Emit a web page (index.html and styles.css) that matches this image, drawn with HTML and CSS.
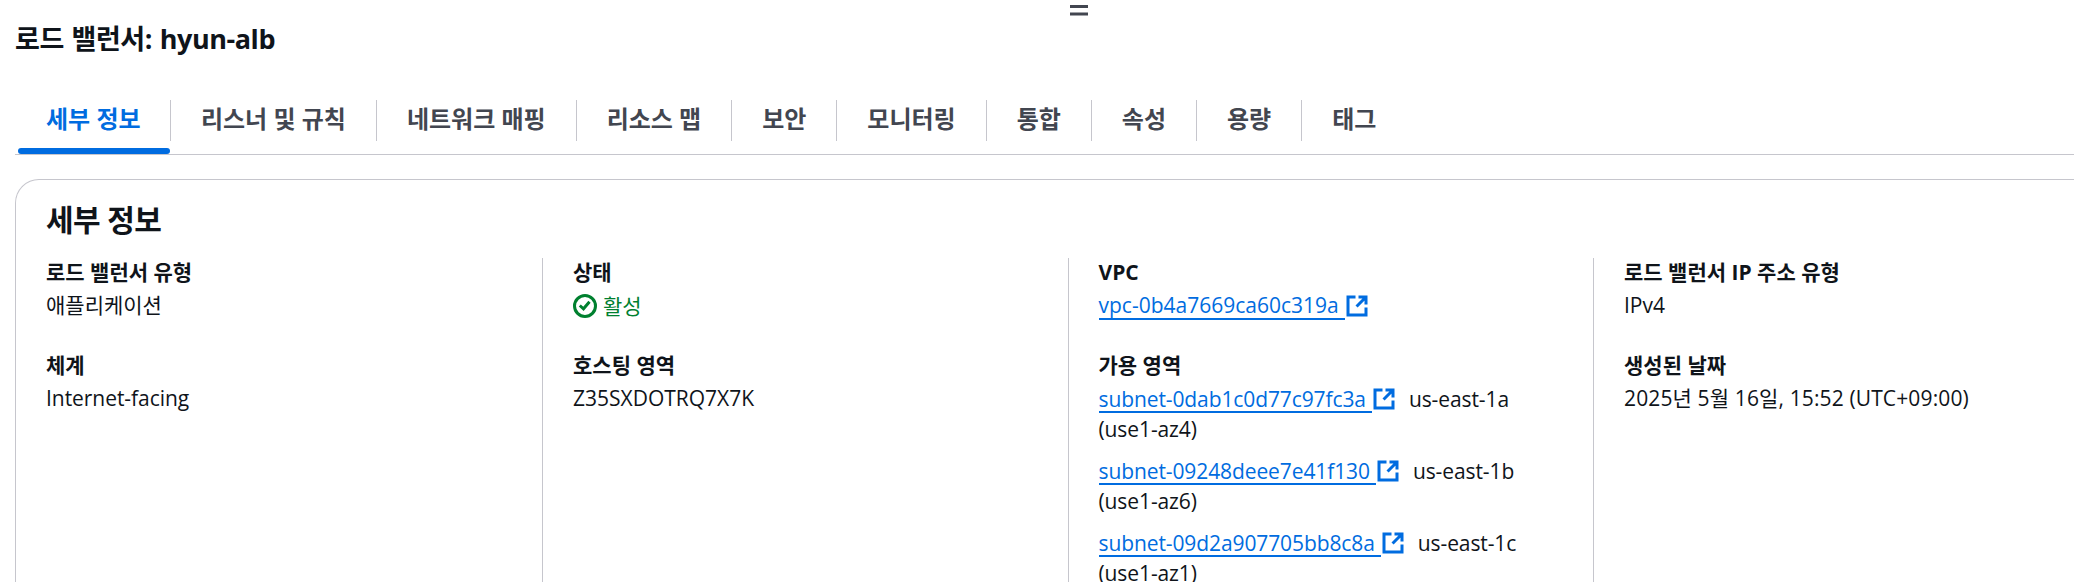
FILE: index.html
```
<!DOCTYPE html>
<html lang="ko">
<head>
<meta charset="utf-8">
<title>로드 밸런서: hyun-alb</title>
<link rel="stylesheet" href="styles.css">
</head>
<body>
<svg class="sprite" aria-hidden="true">
  <symbol id="external" viewBox="0 0 16 16">
    <path d="M9 2h5v5M14 2 7.7 8.3M7 2H2v12h12V9" fill="none" stroke="currentColor" stroke-width="2"/>
  </symbol>
</svg>
<div class="panel">
  <svg class="grip" viewBox="0 0 18 11"><path d="M0 1.5h18M0 9h18" stroke="currentColor" stroke-width="3"/></svg>
  <h1 class="title">로드 밸런서: hyun-alb</h1>
  <nav class="tabs">
    <a class="tab active"><span>세부 정보</span></a>
    <a class="tab"><span>리스너 및 규칙</span></a>
    <a class="tab"><span>네트워크 매핑</span></a>
    <a class="tab"><span>리소스 맵</span></a>
    <a class="tab"><span>보안</span></a>
    <a class="tab"><span>모니터링</span></a>
    <a class="tab"><span>통합</span></a>
    <a class="tab"><span>속성</span></a>
    <a class="tab"><span>용량</span></a>
    <a class="tab"><span>태그</span></a>
  </nav>
  <section class="card">
    <h2 class="card-title">세부 정보</h2>
    <div class="columns">
      <dl class="column">
        <div class="pair"><dt>로드 밸런서 유형</dt><dd>애플리케이션</dd></div>
        <div class="pair"><dt>체계</dt><dd class="scheme">Internet-facing</dd></div>
      </dl>
      <dl class="column">
        <div class="pair"><dt>상태</dt><dd class="status"><svg class="icon" viewBox="0 0 24 24" fill="none" stroke="currentColor" stroke-width="3"><circle cx="12" cy="12" r="10.5"/><path d="m6.8 11.5 3.7 3.3 6-7"/></svg><span>활성</span></dd></div>
        <div class="pair"><dt>호스팅 영역</dt><dd>Z35SXDOTRQ7X7K</dd></div>
      </dl>
      <dl class="column network">
        <div class="pair"><dt>VPC</dt><dd><a class="link"><span class="link-text">vpc-0b4a7669ca60c319a</span><svg class="icon"><use href="#external"/></svg></a></dd></div>
        <div class="pair"><dt>가용 영역</dt>
          <dd class="zones">
            <div><a class="link"><span class="link-text">subnet-0dab1c0d77c97fc3a</span><svg class="icon"><use href="#external"/></svg></a><span class="zone">us-east-1a</span><br>(use1-az4)</div>
            <div><a class="link"><span class="link-text">subnet-09248deee7e41f130</span><svg class="icon"><use href="#external"/></svg></a><span class="zone">us-east-1b</span><br>(use1-az6)</div>
            <div><a class="link"><span class="link-text">subnet-09d2a907705bb8c8a</span><svg class="icon"><use href="#external"/></svg></a><span class="zone">us-east-1c</span><br>(use1-az1)</div>
          </dd>
        </div>
      </dl>
      <dl class="column">
        <div class="pair"><dt>로드 밸런서 IP 주소 유형</dt><dd>IPv4</dd></div>
        <div class="pair"><dt>생성된 날짜</dt><dd class="date">2025년 5월 16일, 15:52 (UTC+09:00)</dd></div>
      </dl>
    </div>
  </section>
</div>
</body>
</html>
```
FILE: styles.css
```
* { box-sizing: border-box; }
html { overflow: hidden; }
body {
  margin: 0;
  height: 582px;
  overflow: hidden;
  background: #fff;
  color: #0f141a;
  font: 21px/30px "Open Sans", "Noto Sans CJK KR", sans-serif;
}
.sprite { position: absolute; width: 0; height: 0; }
.panel { display: flex; flex-direction: column; height: 582px; padding-left: 15px; overflow: hidden; }
.grip { flex: none; width: 18px; height: 11px; margin: 5px 0 0 1055px; color: #424650; }
.title {
  margin: 5px 0 0;
  font-size: 27px;
  line-height: 36px;
  letter-spacing: -.45px;
  word-spacing: 1.2px;
}
.tabs {
  display: flex;
  flex: none;
  height: 98px;
  padding-top: 43px;
  border-bottom: 1px solid #c6c6cd;
}
.tab {
  display: flex;
  flex-direction: column;
  flex: none;
  font-size: 24px;
  font-weight: 700;
  color: #424650;
}
.tab span {
  height: 41px;
  padding: 0 30px;
  line-height: 38px;
  border-right: 1px solid #c6c6cd;
}
.tab:last-child span { border-right: 0; }
.tab.active { color: #006ce0; }
.tab.active span { padding: 0 29.4px 0 31px; }
.tab.active::after {
  content: "";
  height: 6px;
  margin: 7px 1px 0 3px;
  border-radius: 3px;
  background: #006ce0;
}
.card {
  flex: 1;
  min-height: 0;
  margin: 24px -40px 0 0;
  padding: 23px 0 0 30px;
  border: 1px solid #c6c6cd;
  border-width: 1px 0 0 1px;
  border-radius: 24px 0 0 0;
  overflow: hidden;
}
.card-title {
  margin: -1px 0 20px;
  font-size: 30px;
  line-height: 36px;
  letter-spacing: -.6px;
}
.columns { display: grid; grid-template-columns: 496px 526px 525px 1fr; }
.column { margin: 0; display: flex; flex-direction: column; gap: 30px; }
.column + .column { padding-left: 30px; border-left: 1px solid #c6c6cd; }
.column.network { padding-left: 29.5px; }
dt { height: 30px; line-height: 28px; font-weight: 700; }
dd { height: 30px; margin: 3px 0 0; line-height: 29px; }
.icon { flex: none; width: 24px; height: 24px; }
.scheme { letter-spacing: -.05px; }
.status { display: flex; align-items: center; gap: 6px; color: #00802f; }
.link { display: inline-flex; align-items: center; height: 30px; vertical-align: top; color: #006ce0; }
.link-text { height: 29px; margin-top: -1px; padding-right: 6px; border-bottom: 2px solid #006ce0; }
.zones { display: flex; flex-direction: column; gap: 12px; height: auto; line-height: 30px; letter-spacing: -.1px; }
.zone { margin-left: 13px; }
.date { letter-spacing: .13px; }
```
